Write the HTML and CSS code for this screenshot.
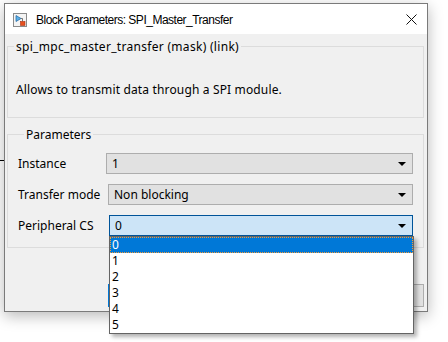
FILE: index.html
```html
<!DOCTYPE html>
<html lang="en">
<head>
	<meta charset="utf-8">
	<title>Block Parameters: SPI_Master_Transfer</title>
	<link rel="stylesheet" href="styles.css">
</head>
<body>

	<div class="wire"></div>

	<div class="window">
		<div class="titlebar">
			<svg class="app-icon" width="14" height="14" viewBox="0 0 14 14">
				<rect x="0.5" y="0.5" width="13" height="13" fill="#f4f4f4" stroke="#8a8a8a"/>
				<path d="M3 2.5 L3 8.5 L8 5.5 Z" fill="#5ab0e8" stroke="#2a6fa8" stroke-width="0.8"/>
				<path d="M8 5.5 L9.5 5.5 L9.5 8.5" fill="none" stroke="#555" stroke-width="0.8"/>
				<rect x="7.5" y="8.5" width="4.5" height="4" fill="#e8501e" stroke="#a8300e" stroke-width="0.6"/>
			</svg>
			<span class="title">Block Parameters: SPI_Master_Transfer</span>
			<svg class="close" width="11" height="11" viewBox="0 0 11 11">
				<path d="M0.5 0.5 L10.5 10.5 M10.5 0.5 L0.5 10.5" stroke="#111" stroke-width="1"/>
			</svg>
		</div>

		<div class="content">
			<fieldset class="group group-desc">
				<legend>spi_mpc_master_transfer (mask) (link)</legend>
				<p class="desc">Allows to transmit data through a SPI module.</p>
			</fieldset>

			<fieldset class="group group-params">
				<legend>Parameters</legend>
				<div class="row">
					<span class="label">Instance</span>
					<div class="combo"><span>1</span><i class="arrow"></i></div>
				</div>
				<div class="row">
					<span class="label">Transfer mode</span>
					<div class="combo shift2"><span>Non blocking</span><i class="arrow"></i></div>
				</div>
				<div class="row">
					<span class="label">Peripheral CS</span>
					<div class="combo shift3 open"><span>0</span><i class="arrow"></i></div>
				</div>
			</fieldset>

			<div class="buttons">
				<button class="btn default">OK</button>
				<button class="btn">Cancel</button>
				<button class="btn">Help</button>
				<button class="btn">Apply</button>
			</div>
		</div>
	</div>

	<ul class="droplist">
		<li class="selected">0</li>
		<li>1</li>
		<li>2</li>
		<li>3</li>
		<li>4</li>
		<li>5</li>
	</ul>

</body>
</html>
```

FILE: styles.css
```css
html {
	background: #fff;
}

body {
	margin: 0;
	padding: 3px 0 0 4px;
	font-family: "Noto Sans", "Liberation Sans", sans-serif;
	font-size: 12px;
	color: #000;
	position: relative;
	height: 339px;
	overflow: hidden;
}

.wire {
	position: absolute;
	left: 0;
	top: 160px;
	width: 5px;
	height: 1px;
	background: #000;
}

.window {
	position: relative;
	width: 422px;
	height: 307px;
	border: 1px solid #7a7a7a;
	background: #f0f0f0;
	box-shadow: 0 4px 14px rgba(0, 0, 0, 0.28);
	display: flex;
	flex-direction: column;
}

.titlebar {
	height: 30px;
	background: #fff;
	display: flex;
	align-items: center;
	padding: 0 0 0 8px;
}

.app-icon {
	margin-top: 1px;
}

.title {
	margin-left: 9px;
	flex: 1;
	font-family: "Liberation Sans", Arial, sans-serif;
	font-size: 12px;
	letter-spacing: -0.5px;
	margin-top: 1px;
}

.close {
	margin-right: 10px;
	margin-top: 1px;
}

.content {
	flex: 1;
	padding: 4px 3px 0 2px;
	display: flex;
	flex-direction: column;
}

.group {
	margin: 0;
	padding: 0;
	border: 1px solid #dcdcdc;
	min-width: 0;
}

.group legend {
	margin-left: 6px;
	padding: 0 2px 0 2px;
}

.group-desc legend {
	letter-spacing: 0.3px;
}

.group-desc {
	height: 78px;
}

.desc {
	margin: 26px 0 0 8px;
	letter-spacing: 0.15px;
}

.group-params {
	margin-top: 8px;
	height: 110px;
	padding: 10px 10px 0 10px;
	display: flex;
	flex-direction: column;
	gap: 10px;
}

.row {
	display: flex;
	align-items: center;
	height: 21px;
}

.label {
	width: 88px;
	flex: none;
}

.combo {
	flex: 1;
	height: 19px;
	border: 1px solid #adadad;
	background: #e1e1e1;
	display: flex;
	align-items: center;
	padding: 0 0 0 5px;
	position: relative;
}

.combo span {
	flex: 1;
}

.combo.shift2 {
	margin-left: 2px;
}

.combo.shift3 {
	margin-left: 3px;
}

.combo.open {
	border-color: #005499;
	background: #cce4f7;
}

.arrow {
	width: 0;
	height: 0;
	border-left: 4px solid transparent;
	border-right: 4px solid transparent;
	border-top: 4px solid #000;
	margin-right: 6px;
}

.buttons {
	margin-top: 36px;
	margin-left: 101px;
	display: flex;
	gap: 8px;
}

.btn {
	flex: 1;
	height: 23px;
	border: 1px solid #adadad;
	background: #e1e1e1;
	font-family: inherit;
	font-size: 12px;
	padding: 0;
}

.btn.default {
	border: 2px solid #0078d7;
}

.droplist {
	position: absolute;
	left: 109px;
	top: 236px;
	width: 303px;
	margin: 0;
	padding: 0;
	list-style: none;
	background: #fff;
	border: 1px solid #646464;
	box-shadow: 3px 3px 4px rgba(0, 0, 0, 0.3);
}

.droplist li {
	height: 16px;
	line-height: 16px;
	padding-left: 2px;
}

.droplist li.selected {
	background: #0078d7;
	color: #fff;
	outline: 1px dotted #f29b38;
	outline-offset: -1px;
}
```
